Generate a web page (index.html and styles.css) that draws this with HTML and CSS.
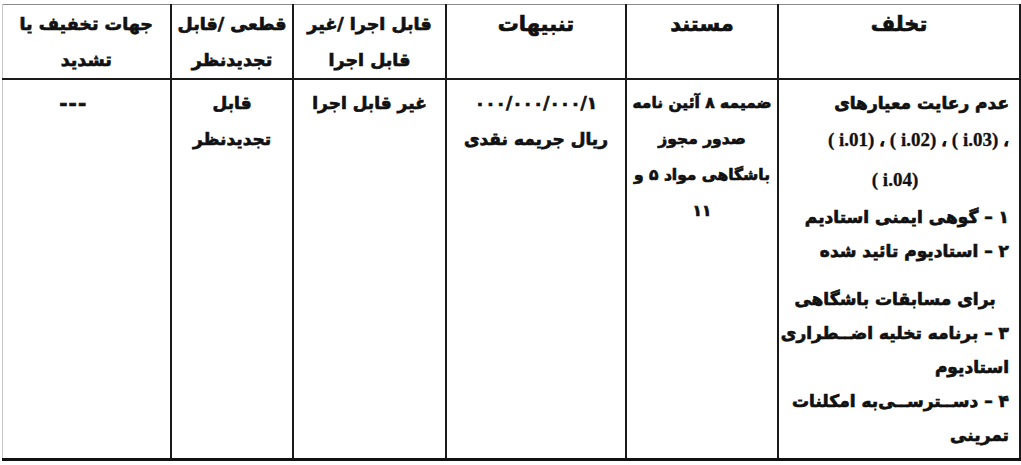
FILE: index.html
```html
<!DOCTYPE html>
<html lang="fa" dir="rtl">
<head>
<meta charset="utf-8">
<link rel="stylesheet" href="styles.css">
</head>
<body>
<table class="sheet">
  <colgroup>
    <col class="c-violation">
    <col class="c-source">
    <col class="c-penalty">
    <col class="c-exec">
    <col class="c-final">
    <col class="c-reduce">
  </colgroup>
  <thead>
    <tr>
      <th class="big">تخلف</th>
      <th class="big">مستند</th>
      <th class="big">تنبیهات</th>
      <th>قابل اجرا /غیر<br>قابل اجرا</th>
      <th>قطعی /قابل<br>تجدیدنظر</th>
      <th>جهات تخفیف یا<br>تشدید</th>
    </tr>
  </thead>
  <tbody>
    <tr>
      <td class="violation">
        <div class="ln">عدم رعایت معیارهای</div>
        <div class="ln latin"><bdo dir="ltr">( i.01) ، ( i.02) ، ( i.03) ،</bdo></div>
        <div class="ln latin mid"><bdo dir="ltr">( i.04)</bdo></div>
        <div class="ln">۱ – گوهی ایمنی استادیم</div>
        <div class="ln">۲ – استادیوم تائید شده</div>
        <div class="ln mid gap">برای مسابقات باشگاهی</div>
        <div class="ln">۳ – برنامه تخلیه اضــطراری</div>
        <div class="ln">استادیوم</div>
        <div class="ln">۴ – دســترســی‌به امکلنات</div>
        <div class="ln">تمرینی</div>
      </td>
      <td class="tight">ضمیمه ۸ آئین نامه<br>صدور مجوز<br>باشگاهی مواد ۵ و<br>۱۱</td>
      <td><bdo dir="ltr">۰۰۰/۰۰۰/۰۰۰/۱</bdo><br>ریال جریمه نقدی</td>
      <td>غیر قابل اجرا</td>
      <td>قابل<br>تجدیدنظر</td>
      <td class="dash">---</td>
    </tr>
  </tbody>
</table>
</body>
</html>
```

FILE: styles.css
```css
html, body {
  margin: 0;
  padding: 0;
  background: #ffffff;
}

body {
  padding-top: 4px;
  font-family: "DejaVu Sans", "Noto Sans", sans-serif;
  color: #111111;
}

.sheet {
  width: 1018px;
  border-collapse: collapse;
  table-layout: fixed;
  font-weight: bold;
  font-size: 17px;
  -webkit-text-stroke: 0.7px #111111;
}

.c-violation { width: 242px; }
.c-source { width: 152px; }
.c-penalty { width: 180px; }
.c-exec { width: 153px; }
.c-final { width: 122px; }
.c-reduce { width: 169px; }

.sheet th,
.sheet td {
  border: 2px solid #1a1a1a;
  text-align: center;
  vertical-align: top;
  line-height: 36px;
  padding: 0 4px;
  white-space: nowrap;
}

.sheet th {
  height: 71px;
  padding-top: 1px;
  font-size: 17.5px;
}

.sheet th.big {
  font-size: 21px;
}

.sheet thead tr th {
  border-top: 1px solid #8a8a8a;
}

.sheet tr > :last-child {
  border-left: 1px solid #c8c8c8;
}

.sheet td {
  height: 372px;
  padding-top: 5px;
  border-bottom: 3px solid #111111;
}

.sheet td.tight {
  padding: 5px 0 0;
  font-size: 15.5px;
}

.sheet td.violation {
  text-align: right;
  padding-right: 10px;
  padding-left: 2px;
  padding-top: 6px;
}

.ln {
  line-height: 34px;
}

.ln.latin {
  font-family: "Liberation Serif", "DejaVu Serif", serif;
  font-size: 19px;
  line-height: 40px;
  -webkit-text-stroke: 0.3px #111111;
}

.ln.mid {
  text-align: center;
}

.ln.gap {
  margin-top: 14px;
}

.dash {
  font-size: 20px;
  letter-spacing: 1px;
  padding-right: 30px !important;
}
```
